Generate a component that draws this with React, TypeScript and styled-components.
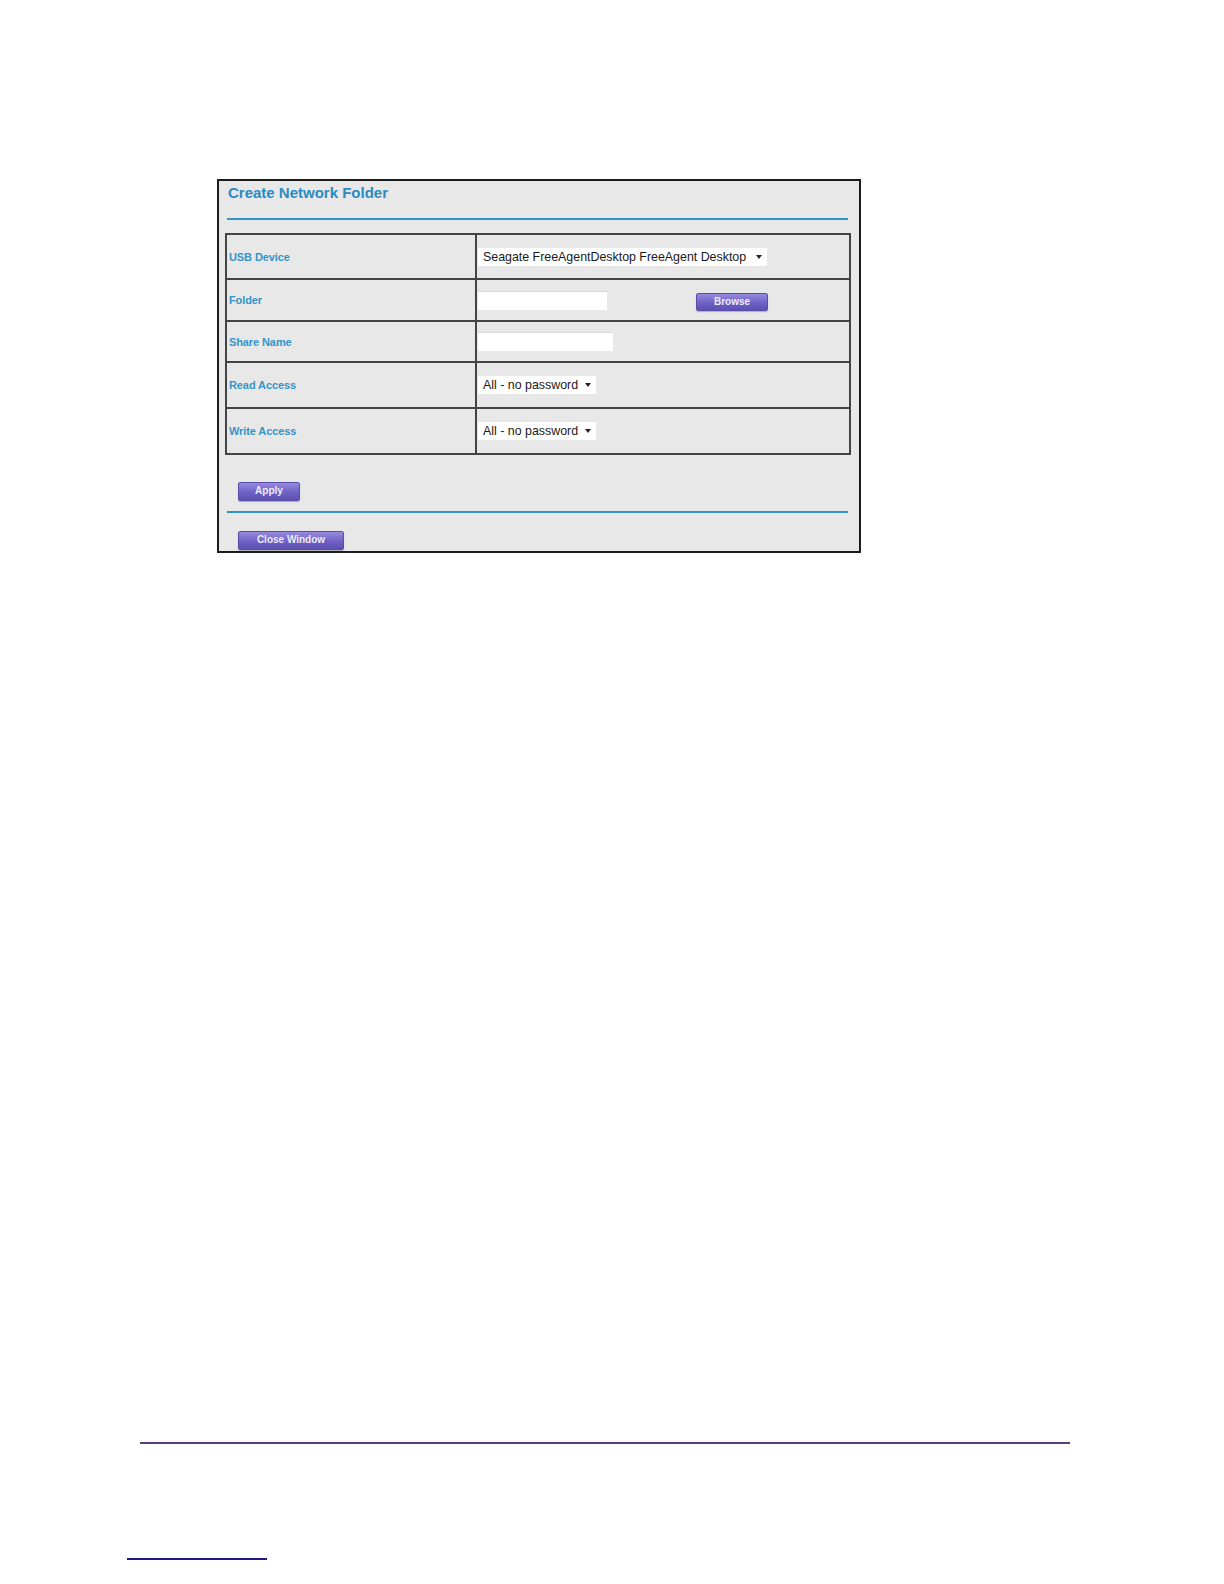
import styled, { createGlobalStyle } from "styled-components";

const GlobalStyle = createGlobalStyle`
    html, body {
        margin: 0;
        padding: 0;
        background: #ffffff;
        font-family: "Liberation Sans", Arial, sans-serif;
    }
`;

interface Field {
    label: string;
    height: number;
    kind: "select" | "input" | "folder";
    value?: string;
    width: number;
}

const fields: Field[] = [
    { label: "USB Device", height: 45, kind: "select", value: "Seagate FreeAgentDesktop FreeAgent Desktop", width: 289 },
    { label: "Folder", height: 42, kind: "folder", width: 129 },
    { label: "Share Name", height: 41, kind: "input", width: 135 },
    { label: "Read Access", height: 46, kind: "select", value: "All - no password", width: 118 },
    { label: "Write Access", height: 46, kind: "select", value: "All - no password", width: 118 },
];

const App = () => {
    return (
        <Page>
            <GlobalStyle />
            <Panel>
                <Title>Create Network Folder</Title>
                <Rule />
                <Table>
                    <tbody>
                        {fields.map(field => (
                            <Row key={field.label} height={field.height}>
                                <LabelCell>{field.label}</LabelCell>
                                <ValueCell>
                                    {field.kind === "select" && (
                                        <SelectBox width={field.width}>
                                            <span>{field.value}</span>
                                            <Caret />
                                        </SelectBox>
                                    )}
                                    {field.kind === "input" && <TextInput width={field.width} />}
                                    {field.kind === "folder" && (
                                        <FolderLine>
                                            <TextInput width={field.width} />
                                            <Button width={72} height={18}>Browse</Button>
                                        </FolderLine>
                                    )}
                                </ValueCell>
                            </Row>
                        ))}
                    </tbody>
                </Table>
                <ApplyBar>
                    <Button width={62} height={19}>Apply</Button>
                </ApplyBar>
                <Rule />
                <CloseBar>
                    <Button width={106} height={19}>Close Window</Button>
                </CloseBar>
            </Panel>
            <FooterRule />
            <FooterMark />
        </Page>
    );
};

const Page = styled.div`
    padding: 179px 0 0 217px;
    height: 1584px;
    box-sizing: border-box;
`;

const Panel = styled.div`
    width: 644px;
    height: 374px;
    box-sizing: border-box;
    border: 2px solid #1c1c1c;
    background: #e8e8e8;
    padding: 0 0 0 6px;
`;

const Title = styled.div`
    margin: 3px 0 0 3px;
    height: 34px;
    font-size: 15px;
    font-weight: bold;
    color: #2a8cc4;
    line-height: 18px;
`;

const Rule = styled.div`
    margin-left: 2px;
    width: 621px;
    height: 2px;
    background: #3194c6;
`;

const Table = styled.table`
    margin-top: 13px;
    width: 626px;
    border-collapse: collapse;
    border: 2px solid #3a3a3a;
`;

const Row = styled.tr<{ height: number }>`
    height: ${props => props.height}px;
`;

const LabelCell = styled.td`
    width: 246px;
    border: 2px solid #444444;
    padding: 0 0 0 2px;
    font-size: 11px;
    font-weight: bold;
    letter-spacing: -0.1px;
    color: #3394c8;
    vertical-align: middle;
`;

const ValueCell = styled.td`
    border: 2px solid #444444;
    padding: 0 0 0 1px;
    vertical-align: middle;
`;

const SelectBox = styled.div<{ width: number }>`
    display: flex;
    align-items: center;
    justify-content: space-between;
    width: ${props => props.width}px;
    height: 18px;
    box-sizing: border-box;
    padding: 0 5px 0 5px;
    background: #ffffff;
    font-size: 12.4px;
    color: #1a1a1a;
    white-space: nowrap;
`;

const Caret = styled.i`
    flex: none;
    width: 0;
    height: 0;
    border-left: 3.5px solid transparent;
    border-right: 3.5px solid transparent;
    border-top: 4px solid #222222;
`;

const TextInput = styled.div<{ width: number }>`
    width: ${props => props.width}px;
    height: 19px;
    background: #ffffff;
    border-top: 1px solid #d8d8d8;
    box-sizing: border-box;
`;

const FolderLine = styled.div`
    display: flex;
    align-items: flex-start;
    gap: 89px;
    padding-top: 1px;

    & > button {
        margin-top: 2px;
    }
`;

const Button = styled.button<{ width: number; height: number }>`
    width: ${props => props.width}px;
    height: ${props => props.height}px;
    padding: 0;
    border: 1px solid #5a4da8;
    border-radius: 2px;
    background: linear-gradient(#978ae0, #6f61c4 55%, #5e50b2);
    box-shadow: 0 1px 1px rgba(0, 0, 0, 0.25);
    color: #ecebfa;
    font-family: "Liberation Sans", Arial, sans-serif;
    font-size: 10px;
    font-weight: bold;
    line-height: 1;
`;

const ApplyBar = styled.div`
    padding: 25px 0 11px 13px;
    height: 20px;
`;

const CloseBar = styled.div`
    padding: 16px 0 0 13px;
`;

const FooterRule = styled.div`
    margin: 889px 0 0 -77px;
    width: 930px;
    height: 1px;
    border-top: 1px solid #5c3d7c;
    background: #5c3d7c;
`;

const FooterMark = styled.div`
    margin: 114px 0 0 -90px;
    width: 140px;
    height: 2px;
    background: #1c1c86;
`;

export default App;
